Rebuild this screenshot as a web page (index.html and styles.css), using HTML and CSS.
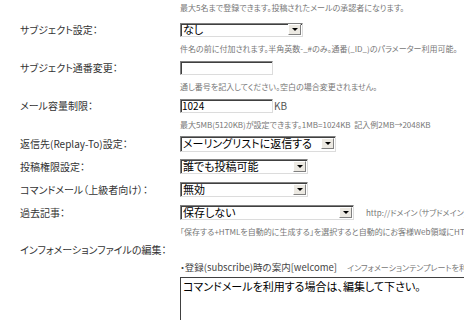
FILE: index.html
```html
<!DOCTYPE html>
<html lang="ja">
<head>
    <meta charset="UTF-8" />
    <title>メーリングリスト設定</title>
    <link rel="stylesheet" href="styles.css">
</head>
<body>

<div class="form">
    <!-- 承認者 -->
    <div class="note first"><span class="label"></span><span>最大5名まで登録できます。投稿されたメールの承認者になります。</span></div>

    <!-- サブジェクト -->
    <div class="row">
        <span class="label">サブジェクト設定：</span>
        <div class="select w-none"><span class="value">なし</span><span class="btn"><i></i></span></div>
    </div>
    <div class="note"><span class="label"></span><span>件名の前に付加されます。半角英数-_#のみ。通番(_ID_)のパラメーター利用可能。</span></div>

    <div class="row">
        <span class="label">サブジェクト通番変更：</span>
        <span class="input"></span>
    </div>
    <div class="note"><span class="label"></span><span>通し番号を記入してください。空白の場合変更されません。</span></div>

    <!-- 容量 -->
    <div class="row">
        <span class="label">メール容量制限：</span>
        <span class="input">1024</span><span class="unit">KB</span>
    </div>
    <div class="note"><span class="label"></span><span>最大5MB(5120KB)が設定できます。1MB=1024KB&nbsp;&nbsp;記入例2MB→2048KB</span></div>

    <!-- 返信先・権限 -->
    <div class="row">
        <span class="label">返信先(Replay-To)設定：</span>
        <div class="select w-reply"><span class="value">メーリングリストに返信する</span><span class="btn"><i></i></span></div>
    </div>
    <div class="row">
        <span class="label">投稿権限設定：</span>
        <div class="select w-post"><span class="value">誰でも投稿可能</span><span class="btn"><i></i></span></div>
    </div>
    <div class="row">
        <span class="label">コマンドメール（上級者向け）：</span>
        <div class="select w-post"><span class="value">無効</span><span class="btn"><i></i></span></div>
    </div>
    <div class="row">
        <span class="label">過去記事：</span>
        <div class="select w-archive"><span class="value">保存しない</span><span class="btn"><i></i></span></div>
        <span class="hint">http://ドメイン（サブドメイン)/ml/archive/</span>
    </div>
    <div class="note"><span class="label"></span><span>「保存する+HTMLを自動的に生成する」を選択すると自動的にお客様Web領域にHTMLを生成します。</span></div>

    <!-- インフォメーション -->
    <div class="row info">
        <span class="label">インフォメーションファイルの編集：</span>
    </div>
    <div class="row sub">
        <span class="label"></span>
        <span class="file">・登録(subscribe)時の案内[welcome]</span>
        <span class="hint">インフォメーションテンプレートを利用する場合</span>
    </div>
    <div class="area-row">
        <span class="label"></span>
        <div class="textarea">コマンドメールを利用する場合は、編集して下さい。</div>
    </div>
</div>

</body>
</html>
```

FILE: styles.css
```css
body {
    margin: 0;
    background: #fff;
    font-family: "Noto Sans CJK JP", "Noto Sans", sans-serif;
    font-size: 10px;
    color: #333;
    overflow: hidden;
    font-feature-settings: "palt";
}
.form {
    width: 640px;
}
.label {
    flex: none;
    width: 160px;
    padding-left: 20px;
    white-space: nowrap;
}
.row, .note, .area-row {
    display: flex;
    align-items: center;
    white-space: nowrap;
}
.row {
    height: 23px;
}
.note {
    height: 15px;
    font-size: 8px;
    color: #777;
}
.note.first {
    margin-bottom: 3px;
}
.row.info {
    height: 20px;
}
.row.sub {
    height: 16px;
}
.area-row {
    align-items: flex-start;
    margin-top: 2px;
}

/* form controls drawn in the old windows style */
.select, .input {
    box-sizing: border-box;
    display: flex;
    align-items: center;
    height: 15px;
    border-top: 1px solid #808080;
    border-left: 1px solid #808080;
    border-right: 1px solid #dcdcdc;
    border-bottom: 1px solid #dcdcdc;
    box-shadow: inset 1px 1px 0 #404040;
    background: #fff;
    color: #000;
}
.select {
    font-size: 11px;
    padding: 0 1px 0 2px;
}
.select .value {
    flex: 1;
    line-height: 13px;
}
.btn {
    box-sizing: border-box;
    width: 13px;
    height: 11px;
    display: flex;
    align-items: center;
    justify-content: center;
    background: #ece9e2;
    border-top: 1px solid #fff;
    border-left: 1px solid #fff;
    border-right: 1px solid #808080;
    border-bottom: 1px solid #808080;
}
.btn i {
    width: 0;
    height: 0;
    border-left: 3px solid transparent;
    border-right: 3px solid transparent;
    border-top: 3px solid #000;
}
.w-none { width: 123px; height: 14px; }
.w-reply { width: 156px; height: 16px; }
.w-post { width: 128px; }
.w-archive { width: 174px; }

.input {
    width: 93px;
    height: 14px;
    font-size: 10px;
    padding-left: 1px;
}
.unit {
    margin-left: 1px;
    font-size: 10px;
    color: #555;
}
.hint {
    margin-left: 12px;
    font-size: 8px;
    color: #777;
}
.file {
    font-size: 9.5px;
    color: #444;
}
.file + .hint {
    margin-left: 10px;
}
.textarea {
    box-sizing: border-box;
    width: 400px;
    height: 80px;
    padding: 0 2px;
    border-top: 1px solid #404040;
    border-left: 1px solid #404040;
    font-size: 11px;
    line-height: 16px;
    color: #000;
}
```
